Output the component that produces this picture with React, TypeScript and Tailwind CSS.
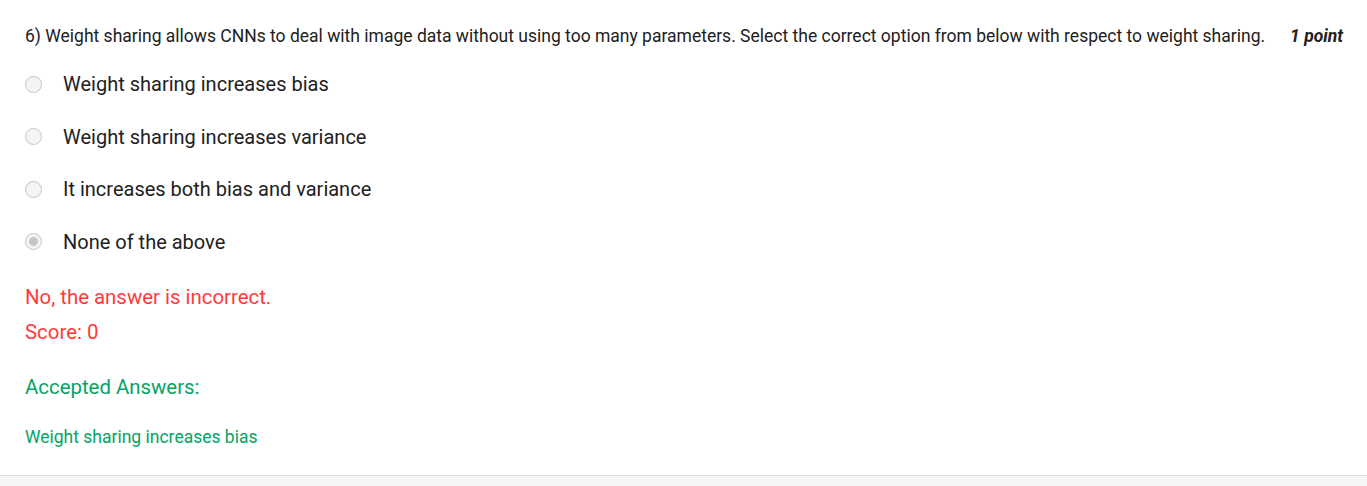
import React from 'react';

const options = [
  'Weight sharing increases bias',
  'Weight sharing increases variance',
  'It increases both bias and variance',
  'None of the above',
];

const Radio = ({ checked }: { checked?: boolean }) => (
  <span className="w-[17px] h-[17px] rounded-full border border-[#c4c4c4] bg-[#f4f4f4] flex items-center justify-center shrink-0">
    {checked && <span className="w-[9px] h-[9px] rounded-full bg-[#c6c6c6]" />}
  </span>
);

export default function App() {
  return (
    <div className="w-[1367px] h-[486px] bg-[#f5f5f8] font-['Roboto',sans-serif] overflow-hidden">
      <div className="bg-white h-[476px] border-b border-[#dcdce4] pl-[25px] pr-[24px] pt-[24px]">
        {/* Question */}
        <div className="flex justify-between items-center text-[17.5px] leading-[24px] text-[#212121]">
          <span>6) Weight sharing allows CNNs to deal with image data without using too many parameters. Select the correct option from below with respect to weight sharing.</span>
          <span className="font-bold italic">1 point</span>
        </div>

        {/* Options */}
        <div className="mt-[10px] flex flex-col">
          {options.map((o, i) => (
            <div key={o} className="flex items-center h-[52.5px] gap-[21px]">
              <Radio checked={i === 3} />
              <span className="text-[20px] text-[#212121]">{o}</span>
            </div>
          ))}
        </div>

        {/* Feedback */}
        <div className="mt-[13px] text-[#ff3a3a] text-[20.4px] leading-[32px]">No, the answer is incorrect.</div>
        <div className="mt-[3px] text-[#ff3a3a] text-[20.4px] leading-[32px]">Score: 0</div>
        <div className="mt-[23px] text-[#05a364] text-[20.4px] leading-[32px]">Accepted Answers:</div>
        <div className="mt-[22px] text-[#05a364] text-[17.5px] leading-[24px]">Weight sharing increases bias</div>
      </div>
    </div>
  );
}
